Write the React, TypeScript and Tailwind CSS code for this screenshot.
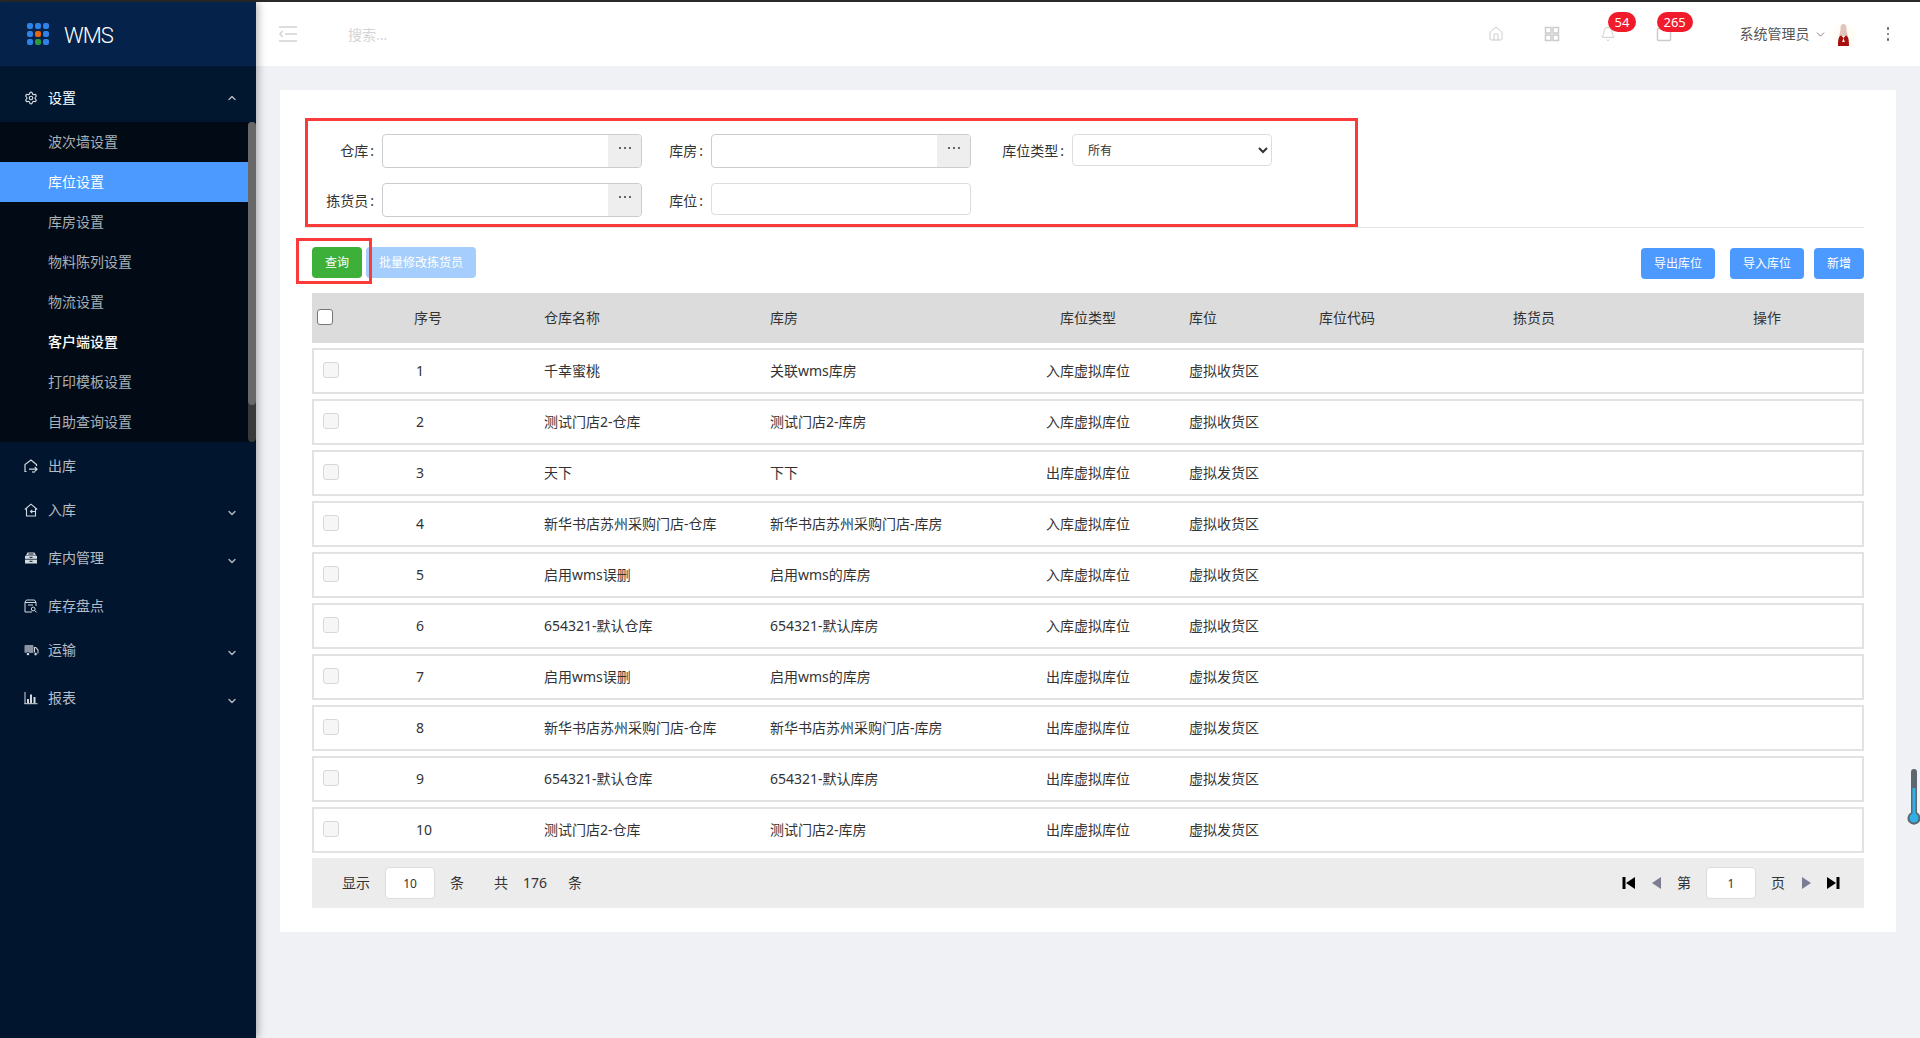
import { Settings, ChevronUp, ChevronDown, House, Bell } from "lucide-react";

const cjk = "font-['Noto_Sans','Noto_Sans_CJK_SC',sans-serif]";

const subMenu = ["波次墙设置", "库位设置", "库房设置", "物料陈列设置", "物流设置", "客户端设置", "打印模板设置", "自助查询设置"];

const rows = [
  ["千幸蜜桃", "关联wms库房", "入库虚拟库位", "虚拟收货区"],
  ["测试门店2-仓库", "测试门店2-库房", "入库虚拟库位", "虚拟收货区"],
  ["天下", "下下", "出库虚拟库位", "虚拟发货区"],
  ["新华书店苏州采购门店-仓库", "新华书店苏州采购门店-库房", "入库虚拟库位", "虚拟收货区"],
  ["启用wms误删", "启用wms的库房", "入库虚拟库位", "虚拟收货区"],
  ["654321-默认仓库", "654321-默认库房", "入库虚拟库位", "虚拟收货区"],
  ["启用wms误删", "启用wms的库房", "出库虚拟库位", "虚拟发货区"],
  ["新华书店苏州采购门店-仓库", "新华书店苏州采购门店-库房", "出库虚拟库位", "虚拟发货区"],
  ["654321-默认仓库", "654321-默认库房", "出库虚拟库位", "虚拟发货区"],
  ["测试门店2-仓库", "测试门店2-库房", "出库虚拟库位", "虚拟发货区"],
];

function OutIcon() {
  return (
    <svg width="14" height="14" viewBox="0 0 14 14" fill="none" stroke="currentColor" strokeWidth="1.2">
      <path d="M2.5 12.5H1V5.5L7 1l5.5 4.500V7" />
      <path d="M5 10.2h8M10.800 8l2.200 2.200-2.200 2.200" />
      <path d="M8 13h3" />
    </svg>
  );
}

function InIcon() {
  return (
    <svg width="14" height="14" viewBox="0 0 14 14" fill="none" stroke="currentColor" strokeWidth="1.1">
      <path d="M0.800 6.500 7 1.200l6.200 5.300" />
      <path d="M2.500 5.500V13h9V5.500" />
      <path d="M11 8.500H6.500M8.300 6.800 6.500 8.500l1.800 1.700" />
    </svg>
  );
}

function StockIcon() {
  return (
    <svg width="14" height="14" viewBox="0 0 14 14" fill="currentColor">
      <path fillRule="evenodd" d="M3.500 1.500h7l1.500 3H2zM4.600 2.600l-.4 1h5.600l-.4-1z" />
      <rect x="1" y="4.800" width="12" height="3" />
      <rect x="1" y="8.600" width="12" height="3.900" />
      <rect x="5.500" y="5.800" width="3" height="1" fill="#02152e" />
      <rect x="5.500" y="9.800" width="3" height="1" fill="#02152e" />
    </svg>
  );
}

function CountIcon() {
  return (
    <svg width="14" height="14" viewBox="0 0 14 14" fill="none" stroke="currentColor" strokeWidth="1">
      <path d="M8 13H1V3.200L2.500 1h8L12 3.200V7" />
      <path d="M1 3.500h11M4 6h5" />
      <circle cx="9.200" cy="10" r="1.900" />
      <path d="m10.600 11.400 2 2" />
    </svg>
  );
}

function TruckIcon() {
  return (
    <svg width="15" height="14" viewBox="0 0 15 14" fill="currentColor">
      <rect x="0.500" y="2" width="9" height="8" rx="1" opacity="0.65" />
      <path fillRule="evenodd" d="M10 4h2l2.500 2.800V10.500H10zM11 5v5h2.500V7.200L11.500 5z" />
      <circle cx="4" cy="11" r="1.700" stroke="#02152e" strokeWidth="0.800" />
      <circle cx="11.600" cy="11" r="1.700" stroke="#02152e" strokeWidth="0.800" />
    </svg>
  );
}

function ChartIcon() {
  return (
    <svg width="14" height="14" viewBox="0 0 14 14" fill="currentColor">
      <rect x="0.500" y="1" width="1" height="12" />
      <rect x="0.500" y="12.200" width="13" height="1" />
      <rect x="3" y="8" width="2" height="4.200" />
      <rect x="6" y="3.500" width="2" height="8.700" />
      <rect x="9.500" y="6" width="2" height="6.200" />
    </svg>
  );
}

function NavItem({ icon, label, height, arrow }: { icon: React.ReactNode; label: string; height: string; arrow?: boolean }) {
  return (
    <div className={`flex items-center pl-[24px] pr-[18px] text-[14px] text-[#b4bcc6] ${height}`}>
      <span className="w-[24px] text-[#d4d9df]">{icon}</span>
      <span className="pb-[2px]">{label}</span>
      {arrow && <ChevronDown size={12} strokeWidth={3} className="ml-auto mt-[6px] text-[#aab2bc]" />}
    </div>
  );
}

function Sidebar() {
  return (
    <aside className="relative z-20 flex w-[256px] shrink-0 flex-col bg-[#02152e] shadow-[2px_0_8px_rgba(0,0,0,0.3)]">
      <div className="flex h-[64px] items-center bg-[#05234a] pl-[27px]">
        <div className="grid grid-cols-3 gap-[2px]">
          {["#2f82e8", "#2f82e8", "#2f82e8", "#2f82e8", "#e8650c", "#2f82e8", "#2f82e8", "#2a9c3f", "#2f82e8"].map((c, i) => (
            <span key={i} className="size-[6px] rounded-[2px]" style={{ backgroundColor: c }} />
          ))}
        </div>
        <span className="ml-[15px] pt-[3px] font-['Roboto',sans-serif] text-[22px] font-light tracking-[-1px] text-white">WMS</span>
      </div>
      <div className="flex h-[56px] items-center bg-[#011730] pl-[24px] pr-[18px] pt-[8px] text-[14px] text-white">
        <Settings size={14} className="mr-[10px] text-[#d4d9df]" />
        <span className="pb-[2px]">设置</span>
        <ChevronUp size={12} strokeWidth={3} className="ml-auto text-[#aab2bc]" />
      </div>
      <div className="flex h-[320px] bg-[#020b15]">
        <ul className="w-[248px]">
          {subMenu.map((m) => (
            <li
              key={m}
              className={`flex h-[40px] items-center pb-[2px] pl-[48px] text-[14px] ${
                m === "库位设置" ? "bg-[#4c9aff] text-white" : m === "客户端设置" ? "font-medium text-white" : "text-[#a9b0b7]"
              }`}
            >
              {m}
            </li>
          ))}
        </ul>
        <div className="w-[8px] rounded-[4px] bg-[#3a3a3a]">
          <div className="h-[283px] rounded-[4px] bg-[#686868]" />
        </div>
      </div>
      <NavItem icon={<OutIcon />} label="出库" height="h-[48px]" />
      <NavItem icon={<InIcon />} label="入库" height="h-[40px]" arrow />
      <NavItem icon={<StockIcon />} label="库内管理" height="h-[56px]" arrow />
      <NavItem icon={<CountIcon />} label="库存盘点" height="h-[40px]" />
      <NavItem icon={<TruckIcon />} label="运输" height="h-[48px]" arrow />
      <NavItem icon={<ChartIcon />} label="报表" height="h-[48px]" arrow />
    </aside>
  );
}

function Badge({ children, left }: { children: React.ReactNode; left: string }) {
  return (
    <span className={`absolute -top-[14px] flex h-[20px] items-center rounded-[10px] bg-[#f01c2c] px-[7px] text-[13px] leading-none text-white ${left}`}>
      {children}
    </span>
  );
}

function Topbar() {
  return (
    <header className="flex h-[64px] shrink-0 items-center bg-white pl-[23px]">
      <svg width="18" height="16" viewBox="0 0 18 16" fill="none" stroke="#d2d2d2" strokeWidth="1.5">
        <path d="M0 1h18M6 8h12M0 15h18M3.500 5 1 8l2.500 3" />
      </svg>
      <input placeholder="搜索..." className="ml-[51px] w-[200px] text-[14px] outline-none placeholder:text-[#d4d4d4]" />
      <div className="ml-auto flex items-center">
        <div className="flex gap-[40px] text-[#cccccc]">
          <House size={16} strokeWidth={1.5} />
          <svg width="16" height="16" viewBox="0 0 16 16" fill="none" stroke="currentColor" strokeWidth="1.5">
            <rect x="1.500" y="1.500" width="5.500" height="5.500" />
            <rect x="9" y="1.500" width="5.500" height="5.500" />
            <rect x="1.500" y="9" width="5.500" height="5.500" />
            <rect x="9" y="9" width="5.500" height="5.500" />
          </svg>
          <div className="relative size-[16px]">
            <Bell size={16} strokeWidth={1.5} />
            <Badge left="left-[8px]">54</Badge>
          </div>
          <div className="relative size-[16px]">
            <svg width="16" height="16" viewBox="0 0 16 16" fill="none" stroke="currentColor" strokeWidth="1.5">
              <rect x="1.500" y="2.500" width="13" height="12" rx="1" />
            </svg>
            <Badge left="left-[1px]">265</Badge>
          </div>
        </div>
        <span className="ml-[68px] pb-[2px] text-[14px] text-[#555]">系统管理员</span>
        <ChevronDown size={13} strokeWidth={1.5} className="ml-[4px] text-[#666]" />
        <svg width="23" height="23" viewBox="0 0 23 23" className="ml-[5px]">
          <circle cx="11.500" cy="11.500" r="11.500" fill="#fffdf5" />
          <path d="M11.500 1c-2.400 0-3 2.500-3 5 0 3-1.200 5-1.200 7h8.400c0-2-1.200-4-1.200-7 0-2.500-.6-5-3-5z" fill="#e2c4bc" />
          <path d="M6 23c0-6 .4-10 3.200-10.500l2.300 2.500 2.300-2.500C16.600 13 17 17 17 23z" fill="#a8100f" />
          <path d="m11.500 15-1.300 4h2.600z" fill="#fff" />
        </svg>
        <div className="ml-[32px] mr-[31px] flex flex-col gap-[3px]">
          <span className="size-[2.500px] rounded-full bg-[#666]" />
          <span className="size-[2.500px] rounded-full bg-[#666]" />
          <span className="size-[2.500px] rounded-full bg-[#666]" />
        </div>
      </div>
    </header>
  );
}

function LookupInput() {
  return (
    <div className="flex h-[34px] w-[260px] overflow-hidden rounded-[4px] border border-[#ccc]">
      <input className="min-w-0 flex-1 outline-none" />
      <button className="flex w-[33px] justify-center gap-[3px] bg-[#eeeeee] pt-[12px]">
        <span className="size-[2px] bg-[#666]" />
        <span className="size-[2px] bg-[#666]" />
        <span className="size-[2px] bg-[#666]" />
      </button>
    </div>
  );
}

function Label({ text, className }: { text: string; className: string }) {
  return (
    <label className={`text-right ${className}`}>
      {text}
      <span className="ml-[2px]">:</span>
    </label>
  );
}

function FilterForm() {
  return (
    <div className="ml-[25px] mt-[28px] h-[110px] w-[1559px] border-b border-[#e5e5e5]">
      <div className="h-[109px] w-[1053px] border-[3px] border-[#fb3a3a] pt-[13px] text-[14px] text-[#333]">
        <div className="flex items-start">
          <Label text="仓库" className="w-[66px] leading-[34px]" />
          <div className="ml-[8px]"><LookupInput /></div>
          <Label text="库房" className="w-[61px] leading-[34px]" />
          <div className="ml-[8px]"><LookupInput /></div>
          <Label text="库位类型" className="w-[93px] leading-[34px]" />
          <select className="ml-[8px] h-[32px] w-[200px] rounded-[4px] border border-[#ddd] bg-white pl-[11px] text-[12px] outline-none">
            <option>所有</option>
          </select>
        </div>
        <div className="mt-[15px] flex items-start">
          <Label text="拣货员" className="w-[66px] leading-[36px]" />
          <div className="ml-[8px]"><LookupInput /></div>
          <Label text="库位" className="w-[61px] leading-[36px]" />
          <input className="ml-[8px] h-[32px] w-[260px] rounded-[4px] border border-[#ddd] outline-none" />
        </div>
      </div>
    </div>
  );
}

function BlueButton({ children, className }: { children: React.ReactNode; className: string }) {
  return <button className={`h-[31px] rounded-[4px] bg-[#4c9aff] text-[12px] text-white ${className}`}>{children}</button>;
}

function Toolbar() {
  return (
    <div className="ml-[16px] mt-[10px] flex w-[1568px] items-start">
      <div className="relative z-10 h-[46px] w-[76px] border-[3px] border-[#fb3a3a] pl-[13px] pt-[6px]">
        <button className="h-[31px] w-[50px] rounded-[4px] bg-[#3cb038] text-[12px] text-white">查询</button>
      </div>
      <button className="-ml-[6px] mt-[9px] h-[31px] w-[110px] rounded-[4px] bg-[#a5cefd] text-[12px] text-white">批量修改拣货员</button>
      <div className="ml-auto mt-[10px] flex">
        <BlueButton className="mr-[15px] w-[74px]">导出库位</BlueButton>
        <BlueButton className="mr-[10px] w-[74px]">导入库位</BlueButton>
        <BlueButton className="w-[50px]">新增</BlueButton>
      </div>
    </div>
  );
}

// rows have a 2px border, so their first and last columns are 2px narrower than the header's
const headCols = "grid grid-cols-[102px_130px_226px_217px_202px_130px_194px_157px_194px] items-center";
const rowCols = "grid grid-cols-[100px_130px_226px_217px_202px_130px_194px_157px_192px] items-center";

function LocationTable() {
  return (
    <div className="ml-[32px] mt-[9px] w-[1552px] text-[14px] text-[#333]">
      <div className={`${headCols} h-[50px] bg-[#dcdcdc] [&>div]:pb-[2px]`}>
        <div className="pl-[5px]">
          <input type="checkbox" className="block size-[16px] appearance-none rounded-[3px] border border-[#777] bg-white" />
        </div>
        <div>序号</div>
        <div>仓库名称</div>
        <div>库房</div>
        <div className="text-center">库位类型</div>
        <div>库位</div>
        <div>库位代码</div>
        <div>拣货员</div>
        <div className="text-center">操作</div>
      </div>
      <div className="mt-[5px] flex flex-col gap-[5px]">
        {rows.map((r, i) => (
          <div key={i} className={`${rowCols} h-[46px] border-2 border-[#e2e2e2] [&>div]:pb-[2px]`}>
            <div className="pl-[9px]">
              <input type="checkbox" className="block size-[16px] appearance-none rounded-[3px] border border-[#d8d8d8] bg-[#f6f6f6]" />
            </div>
            <div className="pl-[2px]">{i + 1}</div>
            <div>{r[0]}</div>
            <div>{r[1]}</div>
            <div className="text-center">{r[2]}</div>
            <div>{r[3]}</div>
          </div>
        ))}
      </div>
      <div className="mt-[5px] flex h-[50px] items-center bg-[#ececec] pl-[30px] pr-[24px] text-[14px]">
        <span className="pb-[2px]">显示</span>
        <input defaultValue="10" className="ml-[15px] h-[32px] w-[50px] rounded-[4px] border border-[#ddd] bg-white text-center text-[12px] outline-none" />
        <span className="ml-[15px] pb-[2px]">条</span>
        <span className="ml-[30px] pb-[2px]">共</span>
        <span className="ml-[15px] pb-[2px]">176</span>
        <span className="ml-[21px] pb-[2px]">条</span>
        <div className="ml-auto flex items-center">
          <svg width="14" height="14" viewBox="0 0 14 14" fill="#000"><rect x="0.500" y="1" width="3" height="12" /><path d="M13 1v12L4 7z" /></svg>
          <svg width="9" height="14" viewBox="0 0 9 14" fill="#7c7c92" className="ml-[16px]"><path d="M9 1v12L0 7z" /></svg>
          <span className="ml-[16px] pb-[2px]">第</span>
          <input defaultValue="1" className="ml-[15px] h-[32px] w-[50px] rounded-[4px] border border-[#ddd] bg-white text-center text-[12px] outline-none" />
          <span className="ml-[15px] pb-[2px]">页</span>
          <svg width="9" height="14" viewBox="0 0 9 14" fill="#7c7c92" className="ml-[17px]"><path d="M0 1v12l9-6z" /></svg>
          <svg width="13" height="14" viewBox="0 0 13 14" fill="#000" className="ml-[16px]"><path d="M0 1v12l9-6z" /><rect x="9.500" y="1" width="3" height="12" /></svg>
        </div>
      </div>
    </div>
  );
}

export default function App() {
  return (
    <div className={`relative flex h-screen flex-col overflow-hidden bg-[#f0f1f5] ${cjk}`}>
      <div className="h-[2px] shrink-0 bg-[#2a2a2a]" />
      <div className="flex min-h-0 flex-1">
        <Sidebar />
        <div className="flex min-w-0 flex-1 flex-col">
          <Topbar />
          <main className="ml-[24px] mt-[24px] h-[842px] w-[1616px] bg-white">
            <FilterForm />
            <Toolbar />
            <LocationTable />
          </main>
        </div>
      </div>
      {/* floating slider widget on the right edge */}
      <svg width="14" height="58" viewBox="0 0 14 58" className="absolute left-[1907px] top-[768px]">
        <path d="M4 4a3 3 0 0 1 6 0v40.500a6.500 6.500 0 1 1-6 0z" fill="#5d6770" />
        <rect x="5.500" y="20" width="3" height="28" fill="#2fb0e6" />
        <circle cx="7" cy="50" r="4.500" fill="#2fb0e6" />
      </svg>
    </div>
  );
}
